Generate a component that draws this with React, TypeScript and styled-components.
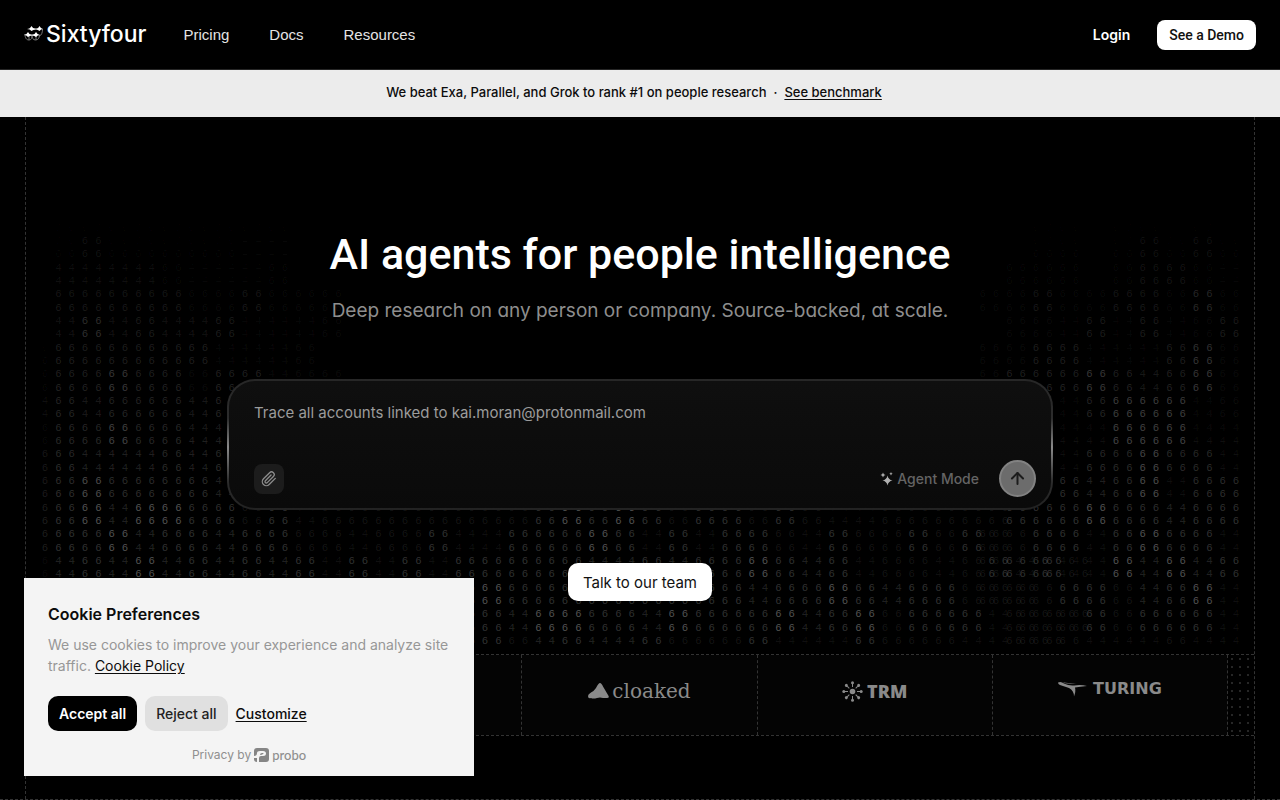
import React from "react";
import styled, { createGlobalStyle, css } from "styled-components";
import { ArrowUp } from "lucide-react";
import { FiPaperclip } from "react-icons/fi";

const GlobalStyle = createGlobalStyle`
  *, *::before, *::after { box-sizing: border-box; }
  html, body { margin: 0; background: #000; }
  body { font-family: Inter, "Liberation Sans", sans-serif; color: #fff; }
  button { font-family: inherit; border: 0; cursor: pointer; }
  h1, h2, p { margin: 0; }
`;

const dash = "1px dashed #333";
const grotesk = `Roboto, "Liberation Sans", sans-serif`;

/* Header */

const Header = styled.header`
  display: flex;
  align-items: center;
  height: 70px;
  padding: 0 24px;
  border-bottom: 1px solid #262626;
`;

const Brand = styled.a`
  display: flex;
  align-items: center;
  gap: 2px;
  margin-right: 37px;
  padding-bottom: 2px;
  color: #fff;
  font-size: 23px;
  font-weight: 500;
  line-height: 30px;
  text-decoration: none;
`;

const Nav = styled.nav`
  display: flex;
  flex: 1;
  gap: 40px;
`;

const NavLink = styled.a`
  color: #e4e4e4;
  font-family: "Liberation Sans", Arial, sans-serif;
  font-size: 15px;
  line-height: 24px;
  text-decoration: none;
`;

const Login = styled.a`
  margin-right: 27px;
  color: #fff;
  font-size: 14px;
  font-weight: 600;
  line-height: 20px;
  text-decoration: none;
`;

const DemoButton = styled.button`
  height: 30px;
  padding: 0 12px;
  border-radius: 8px;
  background: #fff;
  color: #111;
  font-family: ${grotesk};
  font-size: 14px;
  font-weight: 500;
`;

const Banner = styled.div`
  display: flex;
  justify-content: center;
  gap: 7px;
  height: 47px;
  padding: 12px 12px 0 0;
  background: #ececec;
  color: #0c0c0c;
  font-size: 13px;
  font-weight: 500;
  line-height: 20px;
  a { color: inherit; text-underline-offset: 2px; }
`;

/* Hero */

const Frame = styled.main`
  margin: 0 25px;
  border-left: ${dash};
  border-right: ${dash};
`;

const Hero = styled.section`
  position: relative;
  display: flex;
  flex-direction: column;
  align-items: center;
  padding: 111px 24px 53px;
`;

const DigitSvg = styled.svg`
  position: absolute;
  inset: 0;
  width: 100%;
  height: 100%;
  font-family: "Liberation Mono", monospace;
  font-size: 32px;
`;

const Title = styled.h1`
  position: relative;
  font-family: ${grotesk};
  font-size: 43px;
  font-weight: 500;
  line-height: 52px;
  text-align: center;
`;

const Subtitle = styled.p`
  position: relative;
  margin-top: 17px;
  color: #8e8e8e;
  font-size: 19px;
  font-feature-settings: "cv11";
  line-height: 28px;
  text-align: center;
`;

const Prompt = styled.form`
  position: relative;
  display: flex;
  flex-direction: column;
  justify-content: space-between;
  width: 100%;
  max-width: 826px;
  height: 131px;
  margin-top: 54px;
  padding: 20px 15px 11px 25px;
  border: 2px solid transparent;
  border-radius: 28px;
  background:
    linear-gradient(#0f0f0f, #0a0a0a) padding-box,
    linear-gradient(#272727, #2c2c2c 30%, #8a8a8a 52%, #2c2c2c 78%, #222) border-box;
`;

const PromptInput = styled.textarea`
  height: 24px;
  padding: 0;
  border: 0;
  outline: 0;
  resize: none;
  overflow: hidden;
  background: transparent;
  color: #fff;
  font: 400 15px/24px Inter, sans-serif;
  &::placeholder { color: #9c9c9c; opacity: 1; }
`;

const PromptBar = styled.div`
  display: flex;
  align-items: center;
`;

const AttachButton = styled.button`
  display: grid;
  place-items: center;
  width: 30px;
  height: 30px;
  margin-right: auto;
  padding: 0;
  border-radius: 8px;
  background: #1c1c1c;
  color: #8c8c8c;
`;

const ModeButton = styled.button`
  display: flex;
  align-items: center;
  gap: 3px;
  margin-right: 20px;
  padding: 0;
  background: none;
  color: #646464;
  font-size: 14px;
  font-weight: 500;
  line-height: 20px;
`;

const SendButton = styled.button`
  display: grid;
  place-items: center;
  width: 37px;
  height: 37px;
  padding: 0;
  border: 2px solid #828282;
  border-radius: 50%;
  background: #6c6c6c;
  color: #1c1c1c;
`;

const TalkButton = styled.button`
  position: relative;
  height: 38px;
  margin-top: 53px;
  padding: 0 15px;
  border-radius: 10px;
  background: #fff;
  color: #111;
  font-size: 15px;
`;

/* Customer logos */

const LogoRow = styled.section`
  display: flex;
  height: 82px;
  border-top: ${dash};
  border-bottom: ${dash};
`;

const DotStrip = styled.div`
  width: 26px;
  background: radial-gradient(circle at 4px 4px, #262626 1px, transparent 1px) 0 0 / 8px 8px;
`;

const LogoCell = styled.div`
  display: flex;
  flex: 1;
  align-items: center;
  justify-content: center;
  padding-bottom: 8px;
  border-right: ${dash};
  background: #040404;
  color: #8a8a8a;
`;

type WordKind = "cloaked" | "trm" | "turing";
const wordStyles = {
  cloaked: css`gap: 3px; font: 400 20px/24px "DejaVu Serif", serif;`,
  trm: css`gap: 4px; font: 800 18px/24px "Open Sans", sans-serif;`,
  turing: css`gap: 6px; padding-bottom: 4px; font: 700 16px/20px "DejaVu Sans", sans-serif;`,
};
const Wordmark = styled.div<{ $kind: WordKind }>`
  display: flex;
  align-items: center;
  ${(p) => wordStyles[p.$kind]}
`;

const Spacer = styled.div`
  height: 63px;
`;

const NextSection = styled.section`
  border-top: ${dash};
`;

/* Cookie dialog */

const Cookie = styled.aside`
  position: fixed;
  left: 24px;
  bottom: 24px;
  width: 450px;
  max-width: calc(100vw - 48px);
  padding: 24px 24px 11px;
  background: #f4f4f4;
  color: #0c0c0c;
`;

const CookieTitle = styled.h2`
  font-size: 16px;
  font-weight: 600;
  line-height: 24px;
`;

const CookieText = styled.p`
  margin-top: 8px;
  color: #979797;
  font-size: 14px;
  line-height: 21px;
  a { color: #0c0c0c; text-underline-offset: 2px; }
`;

const CookieActions = styled.div`
  display: flex;
  align-items: center;
  gap: 8px;
  margin-top: 20px;
`;

const CookieButton = styled.button<{ $dark?: boolean }>`
  height: 35px;
  padding: 0 11px;
  border-radius: 10px;
  background: ${(p) => (p.$dark ? "#000" : "#e0e0e0")};
  color: ${(p) => (p.$dark ? "#fff" : "#222")};
  font-size: 14px;
  font-weight: ${(p) => (p.$dark ? 600 : 500)};
`;

const CustomizeButton = styled.button`
  padding: 0;
  background: none;
  color: #0c0c0c;
  font-size: 14px;
  font-weight: 500;
  line-height: 20px;
  text-decoration: underline;
  text-underline-offset: 2px;
`;

const Privacy = styled.p`
  display: flex;
  align-items: center;
  justify-content: center;
  gap: 3px;
  margin-top: 14px;
  color: #8f8f8f;
  font-size: 12px;
  line-height: 20px;
`;

const Probo = styled.span`
  display: flex;
  align-items: center;
  gap: 3px;
  font: 500 13px/20px Lato, sans-serif;
`;

/* Digit field: every letter stands for a 2 x 2 block of digits.
   s 6 S are sixes and f 4 are fours, from faint to bright. */

const leftBlocks = [
  ".ssssss.sss",
  ".sssssssss",
  "fs6sssssff",
  "f4444sfffs",
  "s66666ss6sss",
  "f4S46446fffs",
  "s666666fffs",
  "s66S66s66fss",
  "46466646ff",
  "s66S6644ff",
  "66444646ss",
  "66S66664ss",
  "66S4SS66s6fssssssss6S6S6s66s6sffsssss",
  "666S46646 6ssfss6ff666S6f6f66sf6ss6s6s".replace(" ", ""),
  "s464S464646f6f6f66666446466" + "S64" + "6fssfs6f6s",
  "66666666666666666S66666666" + "6466S6" + "466sss",
  "66666666666666666" + "64SS664S666S46S" + "s666fsss",
  "66666666666666666" + "6s4644" + "6sss6fff6sssffss",
];

const rightBlocks = [
  "........ssss.",
  ".....ss.ss.s.",
  ".....ss.s6s6s",
  "....sss.s66sf",
  "...ss6ss66sSs",
  "....ssf6f6fs6",
  "...ss66fff6Ss",
  "...s666S646Ss",
  "......f6SSSfs",
  "......ffSSSff",
  "......f66S66f",
  "......646Sf66",
  "....666S66466",
  "...ss66f6S66f",
  "...s66ffS4S46",
  "...sss66s46Sf",
  "....sss6s666f",
  "....sssfffsff",
];

const CELL = 40;
const ROWS = 35;
const levels: Record<string, [string, number]> = {
  s: ["6", 0.09],
  "6": ["6", 0.2],
  S: ["6", 0.33],
  f: ["4", 0.07],
  "4": ["4", 0.15],
};

function DigitField({ blocks, x0 }: { blocks: string[]; x0: number }) {
  const rows: React.ReactNode[] = [];
  for (let row = 0; row < ROWS; row++) {
    const fade = Math.min(1, 0.25 + (row / 25) * 0.75);
    const spans = [...blocks[Math.floor(row / 2)]].flatMap((ch, i) => {
      if (!levels[ch]) return [];
      const [digit, level] = levels[ch];
      return [0, 1].flatMap((j) => {
        const x = x0 + (i * 2 + j) * CELL;
        if (x < 40) return [];
        const edge = x < 70 ? 0.6 : 1;
        return [
          <tspan key={x} x={x} fillOpacity={(level * fade * edge).toFixed(3)}>
            {digit}
          </tspan>,
        ];
      });
    });
    rows.push(
      <text key={row} y={221 + row * CELL}>
        {spans}
      </text>,
    );
  }
  return <g>{rows}</g>;
}

const DigitBackdrop = () => (
  <DigitSvg viewBox="0 0 3684 1611" preserveAspectRatio="xMidYMax slice" fill="#fff" textAnchor="middle" aria-hidden="true">
    <DigitField blocks={leftBlocks} x0={17} />
    <DigitField blocks={rightBlocks} x0={2630} />
  </DigitSvg>
);

/* Marks */

const BrandMark = () => (
  <svg width="20" height="18" viewBox="0 0 20 18" aria-hidden="true">
    <g fill="none" stroke="#777" strokeWidth="1">
      <path d="M1 9c0 4 1.500 6 4 6s3-2 3-5M8 10c0 3 1 5 3.500 5s4-2 4-5M5 10v5M12 10v5M18.500 4c0 4-1 6-3 7" />
    </g>
    <g fill="#fff">
      <path d="M3 4q3 0 4.500-3Q9 4 12 3.500q2 .500 3.500-2.500Q17 4 19 4q-2 0-3.500 2Q14 4.500 12 4.500 9 4.500 7.500 6 6 4 3 4z" />
      <path d="M0 10q2.500 0 4-3 1.500 3 4 2.500 2.500.500 4-2.500 1.500 3 4 3-2.500 0-4 2-1.500-1.500-4-1.500T4 12q-1.500-2-4-2z" />
    </g>
  </svg>
);

const Sparkles = () => (
  <svg width="14" height="14" viewBox="0 0 14 14" fill="#b0b0b0" aria-hidden="true">
    <path d="M7.500 3.500q.800 4.200 5 5-4.200.800-5 5-.800-4.200-5-5 4.200-.800 5-5z" />
    <path d="M3 .500q.400 2.100 2.500 2.500Q3.400 3.400 3 5.500 2.600 3.400.500 3 2.600 2.600 3 .500z" />
    <path d="M11 0q.300 1.500 1.700 1.800Q11.300 2.100 11 3.600q-.300-1.500-1.700-1.800Q10.700 1.500 11 0z" />
  </svg>
);

const CloakMark = () => (
  <svg width="21" height="16" viewBox="0 0 21 16" fill="currentColor" aria-hidden="true">
    <path d="M12 0c1 0 2 1.500 3 3.500L20 12q2 3-1 3h-4q-3-1-6 0-4 1-6 0Q0 16 0 13q0-2 3-3.500Q6 8 8 5q2.500-5 4-5z" />
  </svg>
);

const BurstMark = () => (
  <svg width="21" height="21" viewBox="0 0 21 21" fill="currentColor" aria-hidden="true">
    <circle cx="10.500" cy="10.500" r="2.800" />
    {[0, 45, 90, 135, 180, 225, 270, 315].map((a) => (
      <g key={a} transform={`rotate(${a} 10.500 10.500)`}>
        <circle cx="10.500" cy="1.800" r="1.500" />
        <path d="M10 3h1v3h-1z" />
      </g>
    ))}
  </svg>
);

const TuringMark = () => (
  <svg width="29" height="16" viewBox="0 0 29 16" fill="currentColor" aria-hidden="true">
    <path d="M0 1.500Q3 0 6 2.500q5 2.500 10 2 7-1 13 .500-7 .500-12 1.500Q18 10 16 15.500q0-6-5-8.500L2 4Q0 3 0 1.500z" />
    <path d="M5 1q8 2 14 1-7 2-13 0z" opacity=".6" />
  </svg>
);

const ProboMark = () => (
  <svg width="15" height="14" viewBox="0 0 15 14" aria-hidden="true">
    <rect width="15" height="14" rx="3" fill="#858585" />
    <path d="M0 8q3 0 3-3 0-2 3-2h3q3 0 3 2.500T9 8H7q-2 0-2 2v4H3v-4H0z" fill="#f4f4f4" />
    <path d="M6 7q0-2 2-2h1q1.500 0 0 1-1 1-3 1z" fill="#858585" />
  </svg>
);

export default function App() {
  return (
    <>
      <GlobalStyle />
      <Header>
        <Brand href="#">
          <BrandMark />
          Sixtyfour
        </Brand>
        <Nav>
          <NavLink href="#">Pricing</NavLink>
          <NavLink href="#">Docs</NavLink>
          <NavLink href="#">Resources</NavLink>
        </Nav>
        <Login href="#">Login</Login>
        <DemoButton>See a Demo</DemoButton>
      </Header>
      <Banner>
        <span>We beat Exa, Parallel, and Grok to rank #1 on people research</span>
        <span>·</span>
        <a href="#">See benchmark</a>
      </Banner>
      <Frame>
        <Hero>
          <DigitBackdrop />
          <Title>AI agents for people intelligence</Title>
          <Subtitle>Deep research on any person or company. Source-backed, at scale.</Subtitle>
          <Prompt onSubmit={(e) => e.preventDefault()}>
            <PromptInput
              rows={1}
              aria-label="Research prompt"
              placeholder="Trace all accounts linked to kai.moran@protonmail.com"
            />
            <PromptBar>
              <AttachButton type="button" aria-label="Attach file">
                <FiPaperclip size={16} />
              </AttachButton>
              <ModeButton type="button">
                <Sparkles />
                Agent Mode
              </ModeButton>
              <SendButton type="submit" aria-label="Send">
                <ArrowUp size={19} strokeWidth={2.5} />
              </SendButton>
            </PromptBar>
          </Prompt>
          <TalkButton>Talk to our team</TalkButton>
        </Hero>
        <LogoRow>
          <DotStrip />
          <LogoCell />
          <LogoCell />
          <LogoCell>
            <Wordmark $kind="cloaked">
              <CloakMark />
              cloaked
            </Wordmark>
          </LogoCell>
          <LogoCell>
            <Wordmark $kind="trm">
              <BurstMark />
              TRM
            </Wordmark>
          </LogoCell>
          <LogoCell>
            <Wordmark $kind="turing">
              <TuringMark />
              TURING
            </Wordmark>
          </LogoCell>
          <DotStrip />
        </LogoRow>
        <Spacer />
      </Frame>
      <NextSection />
      <Cookie role="dialog" aria-label="Cookie Preferences">
        <CookieTitle>Cookie Preferences</CookieTitle>
        <CookieText>
          We use cookies to improve your experience and analyze site traffic. <a href="#">Cookie Policy</a>
        </CookieText>
        <CookieActions>
          <CookieButton $dark>Accept all</CookieButton>
          <CookieButton>Reject all</CookieButton>
          <CustomizeButton>Customize</CustomizeButton>
        </CookieActions>
        <Privacy>
          Privacy by
          <Probo>
            <ProboMark />
            probo
          </Probo>
        </Privacy>
      </Cookie>
    </>
  );
}
